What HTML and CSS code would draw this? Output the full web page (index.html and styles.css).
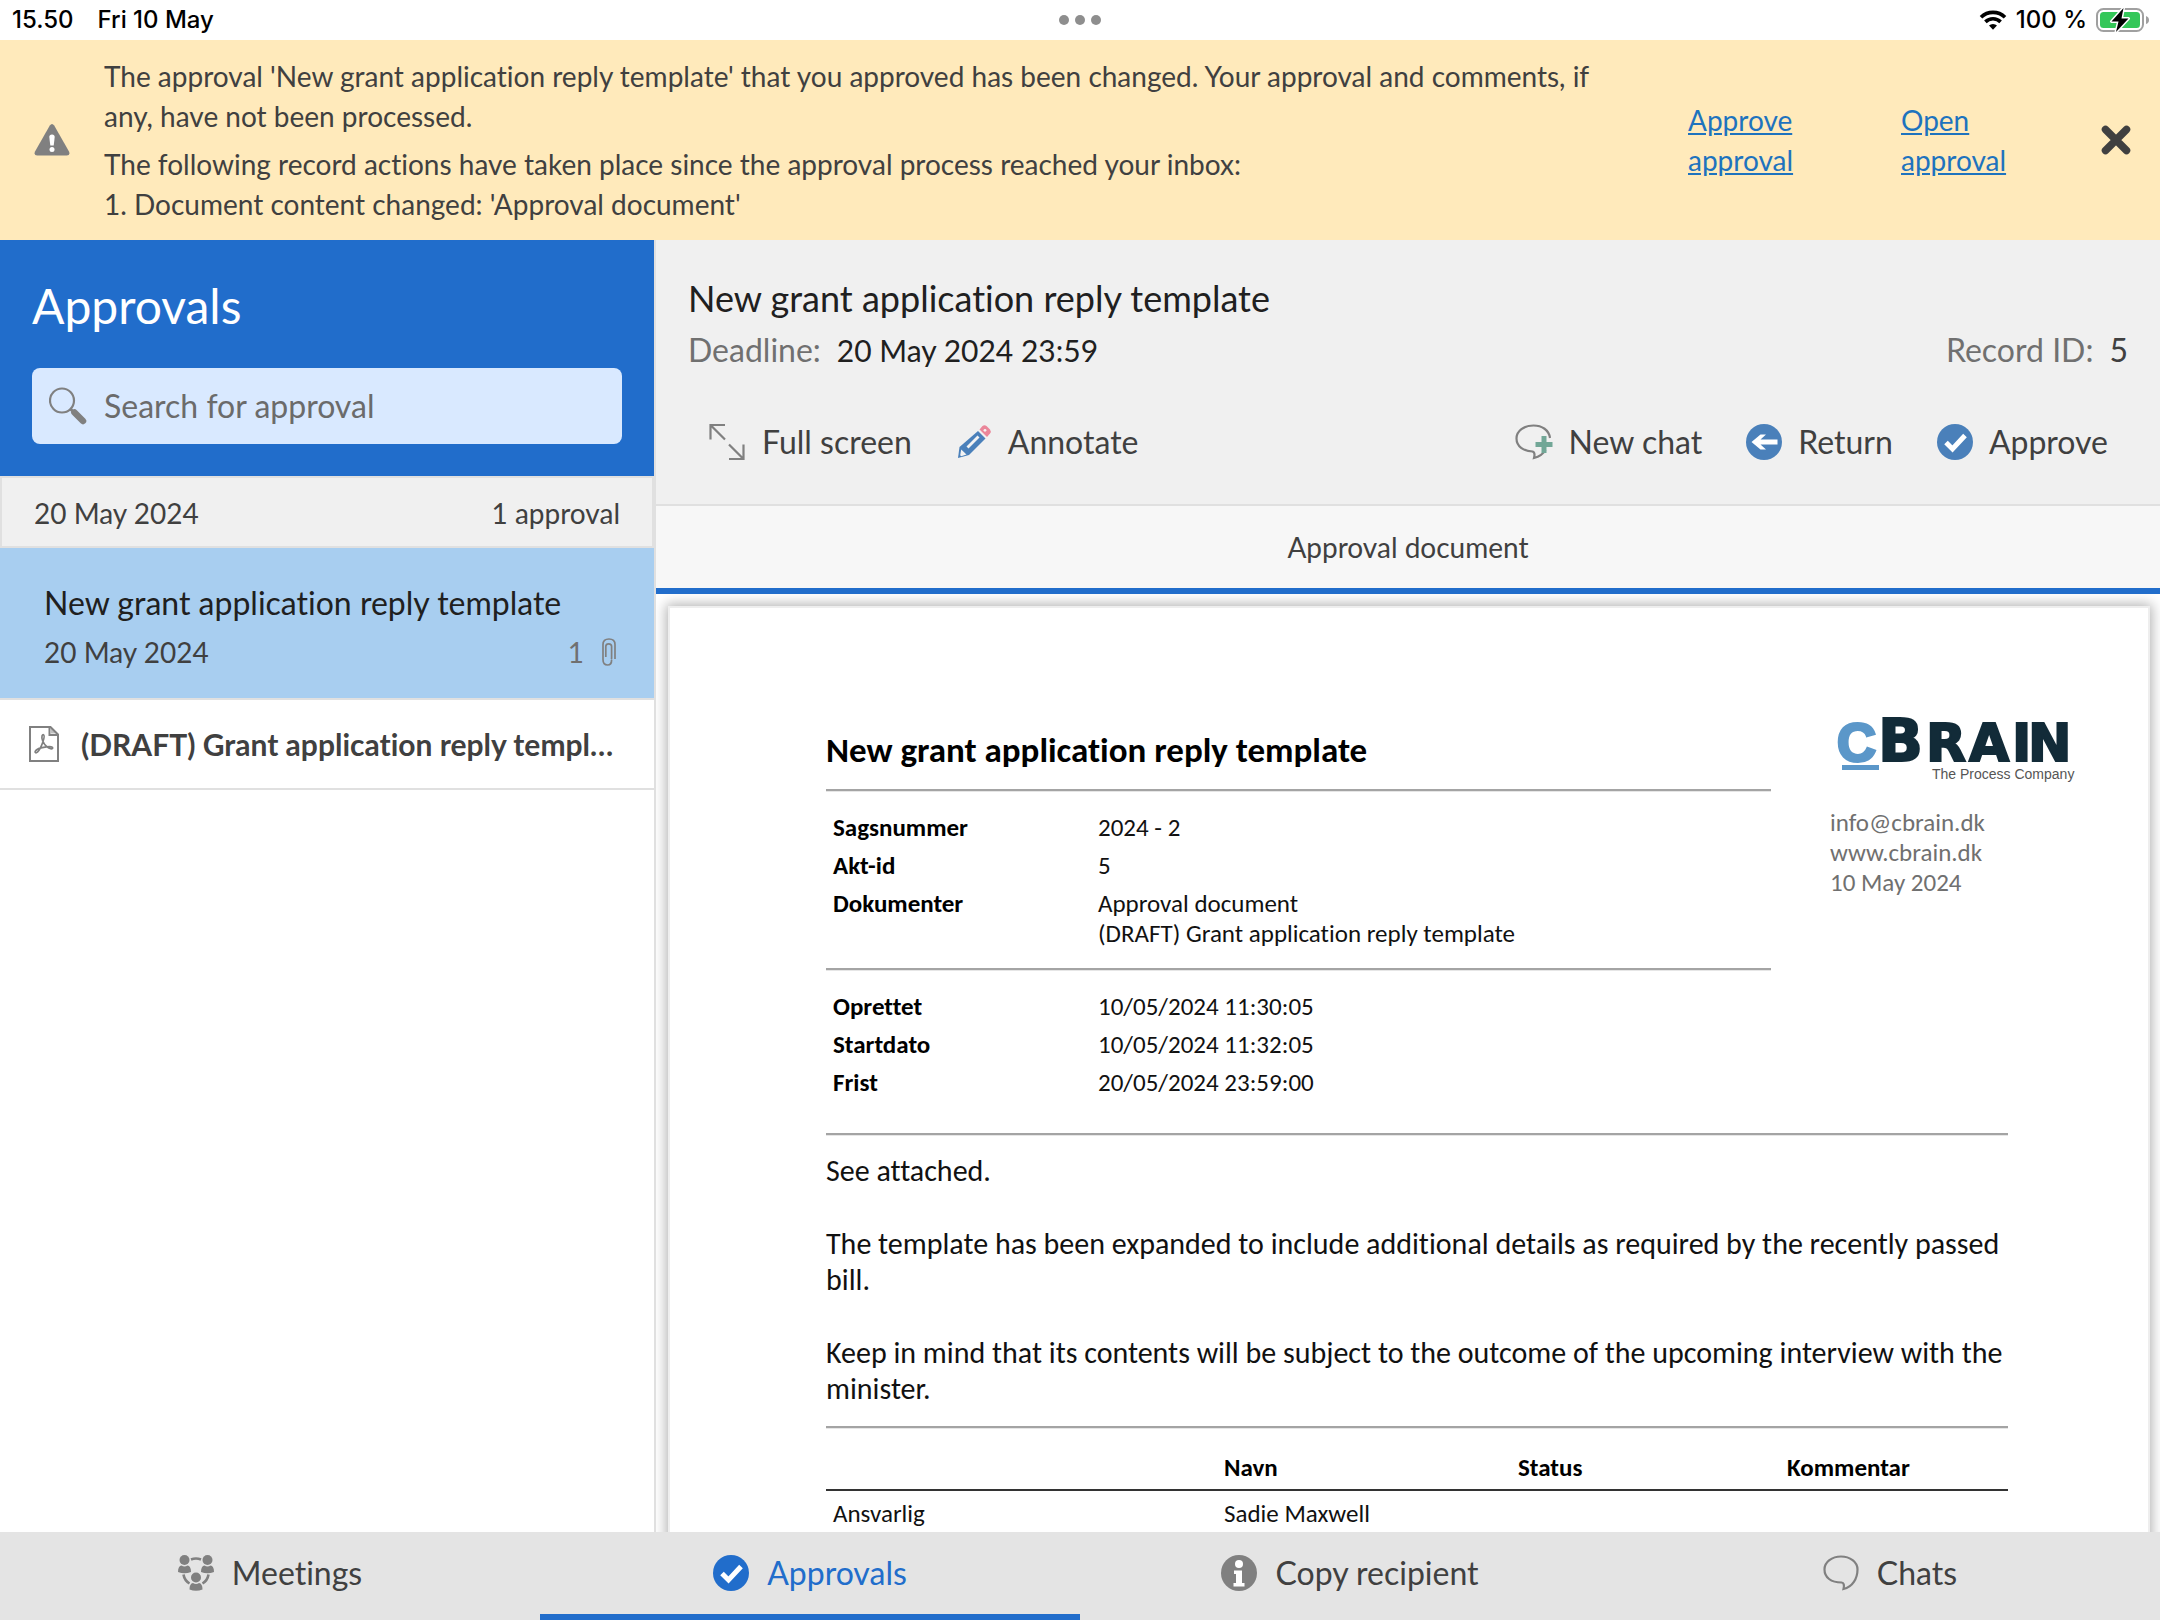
FILE: index.html
```html
<!DOCTYPE html>
<html lang="en">
<head>
<meta charset="utf-8">
<meta name="viewport" content="width=device-width, initial-scale=1">
<title>Approvals</title>
<link rel="stylesheet" href="styles.css">
</head>
<body>
<div class="app">
  <div class="status">
    <div class="status-left"><span>15.50</span><span>Fri 10 May</span></div>
    <svg class="status-dots" width="42" height="10" viewBox="0 0 42 10" aria-hidden="true"><circle cx="5" cy="5" r="5"/><circle cx="21" cy="5" r="5"/><circle cx="37" cy="5" r="5"/></svg>
    <div class="status-right">
      <svg width="28" height="20" viewBox="0 0 28 20" aria-hidden="true">
        <path d="M2 7.3a17 17 0 0 1 24 0" fill="none" stroke="#000" stroke-width="3.6"/>
        <path d="M6.4 11.9a10.8 10.8 0 0 1 15.200 0" fill="none" stroke="#000" stroke-width="3.600"/>
        <path d="M14 19.800l-4-4.200a5.800 5.800 0 0 1 8 0z" fill="#000"/>
      </svg>
      <span>100 %</span>
      <svg width="54" height="26" viewBox="0 0 54 26" aria-hidden="true">
        <rect x="1" y="2" width="46" height="22" rx="6.500" fill="none" stroke="#a0a0a0" stroke-width="2"/>
        <path d="M50 9v8q3-1 3-4t-3-4z" fill="#a0a0a0"/>
        <rect x="4" y="5" width="40" height="16" rx="3.500" fill="#34c759"/>
        <path d="M27.500 1L15.500 14.500h7L20 25l12.500-13.500h-7z" fill="#000" stroke="#fff" stroke-width="3" stroke-linejoin="round" paint-order="stroke"/>
      </svg>
    </div>
  </div>

  <section class="banner" aria-label="Notice">
    <svg class="banner-icon" width="36" height="32" viewBox="0 0 36 32" aria-hidden="true">
      <path d="M15.800 1.500q2.200-3 4.400 0L35 27.500q1.500 3.800-2.200 4H3.200q-3.700-.2-2.200-4z" fill="#808080"/>
      <path d="M15.300 13q0-2.500 2.700-2.500t2.700 2.500l-1 8.500h-3.400z" fill="#fff"/><circle cx="18" cy="25.500" r="2.500" fill="#fff"/>
    </svg>
    <div class="banner-text">
      <p>The approval 'New grant application reply template' that you approved has been changed. Your approval and comments, if any, have not been processed.</p>
      <p>The following record actions have taken place since the approval process reached your inbox:<br>1. Document content changed: 'Approval document'</p>
    </div>
    <a class="banner-link" href="#approve">Approve approval</a>
    <a class="banner-link" href="#open">Open approval</a>
    <button class="close" aria-label="Close">
      <svg width="30" height="30" viewBox="0 0 30 30" aria-hidden="true"><path d="M4.500 4.500l21 21M25.500 4.500l-21 21" stroke="#404040" stroke-width="7.500" stroke-linecap="round"/></svg>
    </button>
  </section>

  <main class="main">
    <aside class="sidebar">
      <header class="side-head">
        <h1>Approvals</h1>
        <div class="search">
          <label for="search"><svg width="38" height="38" viewBox="0 0 38 38" aria-hidden="true"><circle cx="13" cy="13.500" r="12" fill="none" stroke="#808080" stroke-width="2.200"/><path d="M21.500 22l3.500 3.500" stroke="#808080" stroke-width="3"/><path d="M25.500 25.500l8.500 8.500" stroke="#808080" stroke-width="6.500" stroke-linecap="round"/></svg></label>
          <input id="search" type="text" placeholder="Search for approval" aria-label="Search for approval">
        </div>
      </header>
      <div class="group"><span>20 May 2024</span><span>1 approval</span></div>
      <article class="item">
        <h2>New grant application reply template</h2>
        <div class="item-sub">
          <span>20 May 2024</span>
          <span class="count">1
            <svg width="14" height="28" viewBox="0 0 14 28" aria-hidden="true"><path d="M3.800 19V8.500q0-2.700 2.900-2.700t2.900 2.700v11.500q0 1-.3 1.500M13 21V6.500Q13 1 7 1T1 6.500v15Q1 27 5.600 27q4 0 4-5" fill="none" stroke="#808080" stroke-width="1.700"/></svg>
          </span>
        </div>
      </article>
      <a class="attachment" href="#draft">
        <svg width="30" height="36" viewBox="0 0 30 36" aria-hidden="true">
          <path d="M1 1h20.500L29 8.500V35H1z" fill="none" stroke="#808080" stroke-width="2"/>
          <path d="M20.500 1.500V9H28.500" fill="none" stroke="#808080" stroke-width="2"/><path d="M22 2v5.500h5.500z" fill="#808080" opacity=".5"/>
          <path d="M13.700 15c-2-5 0-6.500.8-6.300 1.300.6.400 4.300-.8 7.800-1.500 4.200-3.500 8-5.300 9.700-1.300 1.100-2.700.6-2.200-.8.900-2 6.300-3.900 11.300-4.500 4.200-.5 6.300-.1 6.200 1.100-.2 1.500-3.500.8-5.600-1.100-1.800-1.500-3.400-3.500-4.400-5.900z" fill="none" stroke="#808080" stroke-width="1.700"/>
        </svg>
        <span>(DRAFT) Grant application reply template</span>
      </a>
    </aside>

    <section class="detail">
      <header class="detail-head">
        <h2>New grant application reply template</h2>
        <div class="meta">
          <p><span class="muted">Deadline:</span><span class="dark">20 May 2024 23:59</span></p>
          <p><span class="muted">Record ID:</span><span>5</span></p>
        </div>
        <div class="toolbar">
          <button><svg width="38" height="38" viewBox="0 0 38 38" fill="none" stroke="#808080" stroke-width="2.200" aria-hidden="true"><path d="M17 2H2.500v14.500M2.500 2l14.500 14.500M21 36h14.500V21.500M35.500 36L21 21.500"/></svg>Full screen</button>
          <button><svg width="36" height="36" viewBox="0 0 36 36" aria-hidden="true"><path d="M2 34l1.500-11L22 7l7.500 7.500L13 31z" fill="#4a80ba"/><path d="M23.500 5.500l3-3.500q2-1.500 4 0l3.500 3.500q1.500 2 0 4L31 13z" fill="#ea8699"/><circle cx="29" cy="6.300" r="1.400" fill="#f3f3f3"/><path d="M10.500 22.500L21.500 11.500l2 2L12.500 24.500z" fill="#f3f3f3"/><path d="M5.200 25.500l5.300 5-5.300 1.700-1-1z" fill="#f3f3f3"/></svg>Annotate</button>
          <span class="grow"></span>
          <button><svg width="38" height="36" viewBox="0 0 38 36" aria-hidden="true"><path d="M35 14C34 6 27 1.500 18.500 1.500 9 1.500 1.500 7 1.500 14.500c0 8 7 12.500 16 13q3 1 1.500 6.500 8-2 11.500-8" fill="none" stroke="#808080" stroke-width="2.200"/><path d="M26.500 12h5v6h6v5h-6v6h-5v-6h-6v-5h6z" fill="#72a797"/></svg>New chat</button>
          <button><svg width="36" height="36" viewBox="0 0 36 36" aria-hidden="true"><circle cx="18" cy="18" r="18" fill="#4a80ba"/><path d="M5.500 18L14.500 10.500h5.500l-5.500 5h17v5h-17l5.500 5h-5.500z" fill="#fff"/></svg>Return</button>
          <button><svg width="36" height="36" viewBox="0 0 36 36" aria-hidden="true"><circle cx="18" cy="18" r="18" fill="#4a80ba"/><path d="M9 18.500l6.500 6.500L28 11.500" fill="none" stroke="#fff" stroke-width="5"/></svg>Approve</button>
        </div>
      </header>
      <button class="doc-tab">Approval document</button>

      <div class="viewer">
        <div class="page">
          <div class="page-top">
            <div>
              <h3>New grant application reply template</h3>
              <hr>
              <table class="facts">
                <tr><th scope="row">Sagsnummer</th><td>2024 - 2</td></tr>
                <tr><th scope="row">Akt-id</th><td>5</td></tr>
                <tr><th scope="row">Dokumenter</th><td>Approval document<br>(DRAFT) Grant application reply template</td></tr>
              </table>
              <hr>
              <table class="facts">
                <tr><th scope="row">Oprettet</th><td>10/05/2024 11:30:05</td></tr>
                <tr><th scope="row">Startdato</th><td>10/05/2024 11:32:05</td></tr>
                <tr><th scope="row">Frist</th><td>20/05/2024 23:59:00</td></tr>
              </table>
            </div>
            <address>
              <svg class="logo" width="248" height="64" viewBox="0 0 248 64" role="img" aria-label="cBrain">
                <text class="logo-c" x="7" y="47">C</text>
                <text class="logo-b" x="48" y="47">B</text>
                <text class="logo-rain" x="96 139 182 198" y="47">RAIN</text>
                <rect x="12" y="51" width="37" height="5" fill="#5b97c9"/>
                <text class="logo-tag" x="102" y="65">The Process Company</text>
              </svg>
              <span>info@cbrain.dk</span>
              <span>www.cbrain.dk</span>
              <span>10 May 2024</span>
            </address>
          </div>
          <div class="page-body">
            <hr>
            <p>See attached.</p>
            <p>The template has been expanded to include additional details as required by the recently passed bill.</p>
            <p>Keep in mind that its contents will be subject to the outcome of the upcoming interview with the minister.</p>
            <hr>
            <table class="people">
              <thead><tr><th></th><th>Navn</th><th>Status</th><th>Kommentar</th></tr></thead>
              <tbody><tr><td>Ansvarlig</td><td>Sadie Maxwell</td><td></td><td></td></tr></tbody>
            </table>
          </div>
        </div>
      </div>
    </section>
  </main>

  <nav class="tabs">
    <a href="#meetings"><svg width="36" height="36" viewBox="0 0 36 36" fill="#808080" aria-hidden="true"><circle cx="6.500" cy="5" r="5"/><circle cx="29.500" cy="5" r="5"/><path d="M0 17q0-6 3.500-6.500 3 2 6 0Q13 11 13 17q-6.500 2.500-13 0zM23 17q0-6 3.500-6.500 3 2 6 0Q36 11 36 17q-6.500 2.500-13 0z"/><circle cx="18" cy="22.500" r="5"/><path d="M11.500 34.500q0-6 3.500-6.500 3 2 6 0 3.500.5 3.500 6.500-6.500 2.500-13 0z"/><path d="M13 4.500q5-2 10 0M5.500 19.500q1 6 6 9M30.500 19.500q-1 6-6 9" fill="none" stroke="#808080" stroke-width="2.600"/></svg>Meetings</a>
    <a class="active" href="#approvals" aria-current="page"><svg width="36" height="36" viewBox="0 0 36 36" aria-hidden="true"><circle cx="18" cy="18" r="18" fill="#216dcb"/><path d="M9 18.500l6.500 6.500L28 11.500" fill="none" stroke="#fff" stroke-width="5"/></svg>Approvals</a>
    <a href="#copy"><svg width="36" height="36" viewBox="0 0 36 36" aria-hidden="true"><circle cx="18" cy="18" r="18" fill="#808080"/><circle cx="18" cy="9" r="4" fill="#fff"/><path d="M13 15.500h8V28h2.500v3.500H12.500V28H15v-9h-2z" fill="#fff"/></svg>Copy recipient</a>
    <a href="#chats"><svg width="36" height="36" viewBox="0 0 36 36" aria-hidden="true"><path d="M20.500 34q1.500-6-2-6.500C8 27.500 1.500 22.500 1.500 14.500 1.500 7 9 1.500 18 1.500S34.500 7 34.500 14.500c0 9-5 17.500-14 19.500z" fill="none" stroke="#808080" stroke-width="2.200"/></svg>Chats</a>
  </nav>
</div>
</body>
</html>
```
FILE: styles.css
```css
* { box-sizing: border-box; }

body {
  margin: 0;
  background: #fff;
  color: #404040;
  font: 28px/40px Lato, "Noto Sans", sans-serif;
  font-variant-ligatures: none;
}

h1, h2, h3, p { margin: 0; font-weight: 400; }
button { font: inherit; color: inherit; background: none; border: 0; padding: 0; cursor: pointer; }
a { color: inherit; text-decoration: none; }
svg { flex: none; display: block; }

.app { display: flex; flex-direction: column; height: 100vh; }

/* Device status bar */
.status {
  display: grid;
  grid-template-columns: 1fr auto 1fr;
  align-items: center;
  height: 40px;
  padding: 0 10px;
  color: #000;
  font: 500 24px/40px Inter, sans-serif;
}
.status-left { display: flex; gap: 24px; padding-left: 2px; }
.status-dots { fill: #8e8e8e; }
.status-right { display: flex; align-items: center; justify-content: flex-end; gap: 9px; }

/* Notice */
.banner {
  display: grid;
  grid-template-columns: 104px 1fr 213px 170px 89px;
  align-items: center;
  padding: 16px 0;
  background: #ffeabb;
}
.banner-icon { margin-left: 34px; }
.banner-text { display: grid; gap: 8px; padding-right: 60px; }
.banner-link { max-width: 140px; color: #1e73be; text-decoration: underline; }
.close { justify-self: center; }

.main { display: flex; flex: 1; min-height: 0; }

/* Sidebar */
.sidebar { flex: 0 0 656px; min-width: 0; border-right: 2px solid #e0e0e0; }
.side-head { padding: 36px 32px 32px; background: #216dcb; }
.side-head h1 { margin-bottom: 32px; color: #fff; font-size: 48px; line-height: 60px; }
.search { display: flex; align-items: center; height: 76px; border-radius: 8px; background: #d9e9ff; }
.search label { width: 72px; padding-left: 17px; }
.search input {
  flex: 1;
  min-width: 0;
  padding: 0;
  border: 0;
  outline: 0;
  background: none;
  color: #404040;
  font: inherit;
  font-size: 32px;
}
.search input::placeholder { color: #6b6b6b; opacity: 1; }
.group {
  display: flex;
  justify-content: space-between;
  padding: 15px 32px 13px;
  border: 2px solid #e0e0e0;
  background: #f0f0f0;
}
.item { padding: 30px 38px 22px 44px; border-bottom: 2px solid #e0e0e0; background: #a8cef0; }
.item h2 { color: #202020; font-size: 32px; line-height: 50px; }
.item-sub { display: flex; justify-content: space-between; line-height: 48px; }
.count { display: flex; align-items: center; gap: 18px; color: #707070; }
.attachment {
  display: flex;
  align-items: center;
  gap: 22px;
  padding: 24px 36px 24px 29px;
  border-bottom: 2px solid #e0e0e0;
  font-size: 30px;
  font-weight: 700;
}
.attachment span { overflow: hidden; white-space: nowrap; text-overflow: ellipsis; }

/* Detail */
.detail { display: flex; flex: 1; flex-direction: column; min-width: 0; }
.detail-head {
  padding: 32px 32px 30px;
  border-bottom: 2px solid #e0e0e0;
  background: #f0f0f0;
  font-size: 32px;
}
.detail-head h2 { color: #202020; font-size: 36px; line-height: 52px; }
.meta { display: flex; justify-content: space-between; line-height: 52px; }
.meta p { display: flex; gap: 16px; }
.muted { color: #707070; }
.dark { color: #202020; font-size: 30px; }
.toolbar { display: flex; gap: 44px; margin-top: 34px; padding: 0 20px; }
.toolbar button { display: flex; align-items: center; gap: 16px; height: 64px; }
.grow { flex: 1; }
.doc-tab { height: 88px; border-bottom: 6px solid #216dcb; background: #f7f7f7; }

/* Document */
.viewer { flex: 1; min-height: 0; padding: 12px 10px 0 12px; overflow: hidden; }
.page {
  min-height: 100%;
  padding: 106px 70px 40px 156px;
  border: 2px solid #eee;
  box-shadow: 0 0 12px 2px rgba(0, 0, 0, .3);
  background: #fff;
  color: #111;
  font: 25px/30px Carlito, Calibri, Lato, sans-serif;
  font-variant-ligatures: none;
}
.page hr { margin: 0; border: 0; border-top: 2px solid #a4a4a4; border-bottom: 1px solid #e6e6e6; }
.page-top { display: grid; grid-template-columns: 1fr 248px; gap: 59px; }
.page h3 { margin-bottom: 17px; padding-top: 14px; color: #000; font-size: 35px; font-weight: 700; line-height: 44px; }
.facts { margin: 17px 0 15px; border-collapse: collapse; }
.facts th, .facts td { padding: 4px 0; text-align: left; vertical-align: top; }
.facts th { width: 272px; padding-left: 7px; color: #000; }
.page address { display: flex; flex-direction: column; color: #707070; font-style: normal; }
.logo { margin-bottom: 30px; overflow: visible; font-family: "DejaVu Sans", sans-serif; font-weight: 700; }
.logo-c { fill: #5b97c9; stroke: #5b97c9; stroke-width: 3; font-family: "Liberation Sans", sans-serif; font-size: 54px; }
.logo-b, .logo-rain { fill: #122b38; stroke: #122b38; stroke-width: 2; }
.logo-b { font-size: 59px; }
.logo-rain { font-size: 52px; }
.logo-tag { fill: #555; font: 14px "Liberation Sans", sans-serif; }
.page-body { margin: 16px 70px 0 0; }
.page-body p { margin: 37px 0; font-size: 30px; line-height: 36px; }
.page-body hr + p { margin-top: 17px; }
.page-body p:has(+ hr) { margin-bottom: 19px; }
.people { width: 100%; margin-top: 20px; border-collapse: collapse; table-layout: fixed; }
.people th { padding: 4px 0 6px; border-bottom: 2px solid #333; color: #000; text-align: left; }
.people td { padding: 8px 0; }
.people th:nth-child(1) { width: 398px; }
.people th:nth-child(2) { width: 294px; }
.people th:nth-child(3) { width: 269px; }
.people td:first-child { padding-left: 7px; }

/* Bottom navigation */
.tabs { display: grid; grid-template-columns: repeat(4, 1fr); height: 88px; background: #e4e4e4; font-size: 32px; }
.tabs a { display: flex; align-items: center; justify-content: center; gap: 18px; border-bottom: 6px solid transparent; }
.tabs .active { border-color: #216dcb; color: #216dcb; }
```
